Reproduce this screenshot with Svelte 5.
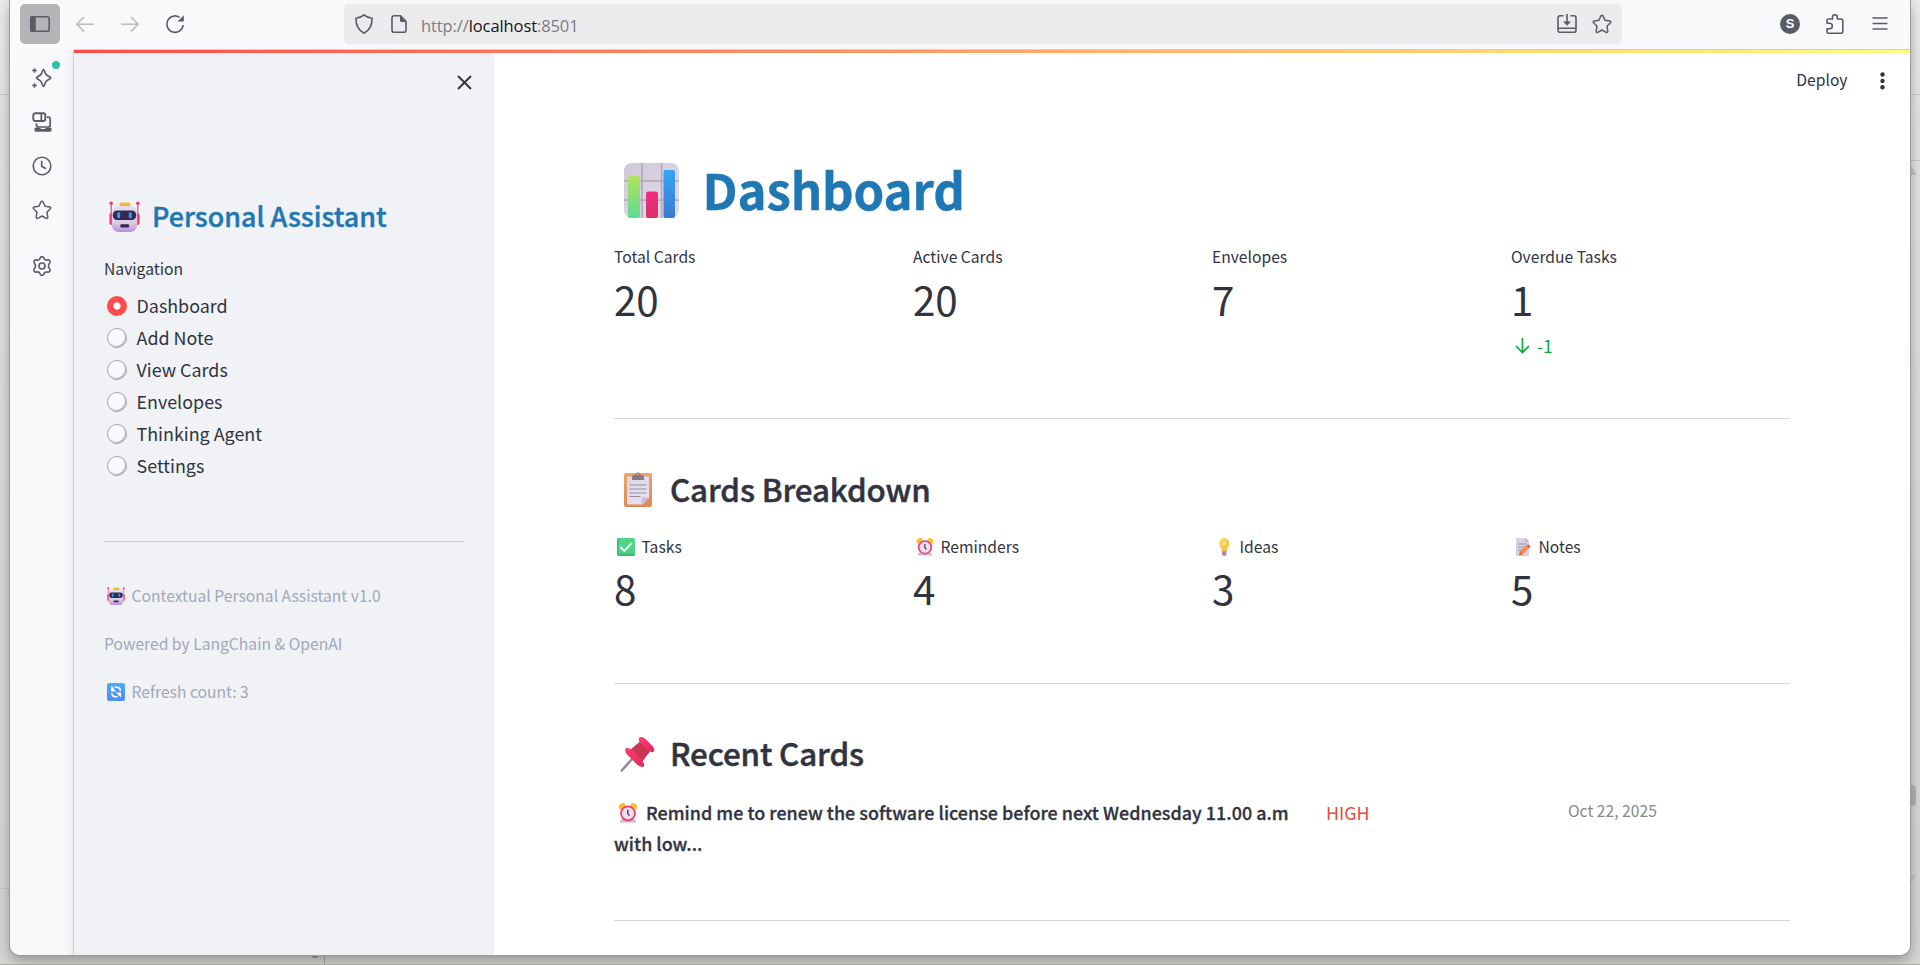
<script>
  const nav = ['Dashboard', 'Add Note', 'View Cards', 'Envelopes', 'Thinking Agent', 'Settings'];
  let current = $state('Dashboard');

  const totals = [
    { label: 'Total Cards', value: '20' },
    { label: 'Active Cards', value: '20' },
    { label: 'Envelopes', value: '7' },
    { label: 'Overdue Tasks', value: '1', delta: '-1' }
  ];
  const breakdown = [
    { icon: 'check', label: 'Tasks', value: '8' },
    { icon: 'clock', label: 'Reminders', value: '4' },
    { icon: 'bulb', label: 'Ideas', value: '3' },
    { icon: 'memo', label: 'Notes', value: '5' }
  ];
</script>

<svg class="defs" aria-hidden="true">
  <defs>
    <linearGradient id="gHead" x1="0" y1="0" x2="0" y2="1"><stop offset="0" stop-color="#e6dcee" /><stop offset=".65" stop-color="#d9cde2" /><stop offset="1" stop-color="#bd8be0" /></linearGradient>
    <linearGradient id="gPanel" x1="0" y1="0" x2="1" y2="1"><stop offset="0" stop-color="#cfc8d6" /><stop offset=".5" stop-color="#d9d2e0" /><stop offset="1" stop-color="#e4dcea" /></linearGradient>
    <linearGradient id="gGreen" x1="0" y1="0" x2="0" y2="1"><stop offset="0" stop-color="#b2e35c" /><stop offset="1" stop-color="#5ddc92" /></linearGradient>
    <linearGradient id="gPink" x1="0" y1="0" x2="0" y2="1"><stop offset="0" stop-color="#ee2d86" /><stop offset="1" stop-color="#d93065" /></linearGradient>
    <linearGradient id="gBlue" x1="0" y1="0" x2="0" y2="1"><stop offset="0" stop-color="#34a6f6" /><stop offset="1" stop-color="#3b78d0" /></linearGradient>
    <linearGradient id="gBoard" x1="0" y1="0" x2="0" y2="1"><stop offset="0" stop-color="#eda46a" /><stop offset="1" stop-color="#d98b57" /></linearGradient>
    <linearGradient id="gPaper" x1="0" y1="0" x2="1" y2="1"><stop offset="0" stop-color="#dcd5e6" /><stop offset="1" stop-color="#ece3f5" /></linearGradient>
    <linearGradient id="gBulb" x1="0" y1="0" x2="1" y2="1"><stop offset="0" stop-color="#ffe066" /><stop offset="1" stop-color="#f6b13a" /></linearGradient>
    <linearGradient id="gPin" x1="0" y1="0" x2="1" y2="1"><stop offset="0" stop-color="#ff3f6e" /><stop offset="1" stop-color="#e4285c" /></linearGradient>
    <linearGradient id="gSync" x1="0" y1="0" x2="0" y2="1"><stop offset="0" stop-color="#50aafc" /><stop offset="1" stop-color="#4a8ff0" /></linearGradient>

    <symbol id="robot" viewBox="0 0 31 31">
      <rect x=".5" y="12" width="5" height="12" rx="2" fill="#f7306d" /><rect x="25.500" y="12" width="5" height="12" rx="2" fill="#f7306d" />
      <path d="M2.200 3v11M28.800 3v11" stroke="#e83a72" stroke-width="1.100" /><circle cx="2.200" cy="2.200" r="1.700" fill="#f7306d" /><circle cx="28.800" cy="2.200" r="1.700" fill="#f7306d" />
      <rect x="10.500" y="1.500" width="11" height="6" rx="2" fill="#f5b62e" />
      <rect x="2.800" y="5" width="25.400" height="26" rx="7" fill="url(#gHead)" />
      <rect x="3.800" y="9.500" width="23.400" height="9.400" rx="4.300" fill="#38274f" />
      <rect x="8.200" y="11.300" width="3" height="6" rx="1.300" fill="#20a5f5" /><rect x="19.800" y="11.300" width="3" height="6" rx="1.300" fill="#20a5f5" />
      <rect x="11.300" y="23.200" width="8.800" height="3.200" rx="1.200" fill="#38274f" />
    </symbol>
    <symbol id="chart" viewBox="0 0 55 55">
      <rect width="55" height="55" rx="8" fill="url(#gPanel)" />
      <path d="M0 17.800h55M0 37.200h55M18 0v55M37.600 0v55" stroke="#b3abbb" stroke-width="1.700" />
      <rect x="4" y="13" width="12" height="42" rx="2" fill="url(#gGreen)" /><rect x="22" y="28.500" width="12" height="26.500" rx="2" fill="url(#gPink)" /><rect x="39.500" y="7" width="11.500" height="48" rx="2" fill="url(#gBlue)" />
    </symbol>
    <symbol id="board" viewBox="0 0 28 35">
      <rect y="1" width="28" height="34" rx="2" fill="url(#gBoard)" /><path d="M3 4.500h22v21l-6.500 7H4a1 1 0 0 1-1-1z" fill="url(#gPaper)" />
      <path d="M25 25.500l-7.500 7V27a1.500 1.500 0 0 1 1.500-1.500z" fill="#cbb9dd" /><path d="M5.500 13h17M5.500 17h17M5.500 21h17M5.500 24.500h11" stroke="#968f9f" stroke-width="1.100" />
      <path d="M8 8V4.700Q8 3 10 3h1.500a2.500 2.500 0 0 1 5 0H18q2 0 2 1.700V8z" fill="#837b8a" />
      <circle cx="14" cy="2.500" r="1" fill="#c9a98f" />
    </symbol>
    <symbol id="check" viewBox="0 0 18 18"><rect width="18" height="18" rx="2" fill="#4fd489" /><path d="M0 2v14q0 2 2 2h14q2 0 2-2v-.5H1.500V0Q0 .2 0 2z" fill="#3dbb75" /><path d="M3.700 9.500l3.700 3.400 7-7.500" fill="none" stroke="#fff" stroke-width="1.800" stroke-linecap="round" stroke-linejoin="round" /></symbol>
    <symbol id="clock" viewBox="0 0 18 18">
      <path d="M3 14.500h12l1.500 3h-15z" fill="#cdb9df" /><ellipse cx="3.600" cy="2.900" rx="3.300" ry="2.500" transform="rotate(-35 3.600 2.900)" fill="#fbbc35" /><ellipse cx="14.400" cy="2.900" rx="3.300" ry="2.500" transform="rotate(35 14.400 2.900)" fill="#fbc535" />
      <circle cx="9" cy="9.300" r="6.300" fill="#ecdff2" stroke="#f2416c" stroke-width="1.700" /><path d="M8.800 6v3.500l1.600 1.900" fill="none" stroke="#493058" stroke-width="1.200" />
    </symbol>
    <symbol id="bulb" viewBox="0 0 18 18"><path d="M7 12h4.500v4.600q0 1.400-2.200 1.400T7 16.600z" fill="#a78bb5" /><path d="M9.200 0a5 5 0 0 0-5 5c0 3.700 2.300 4.300 2.500 8.300h5c.2-4 2.500-4.600 2.500-8.300a5 5 0 0 0-5-5z" fill="url(#gBulb)" /><circle cx="9.500" cy="5" r="2" fill="#ffeb96" /></symbol>
    <symbol id="memo" viewBox="0 0 18 18"><path d="M2 0h9.500L15 3.500V18H2z" fill="#d8cfe0" /><path d="M11.500 0L15 3.500h-3.500z" fill="#b6a8c4" /><path d="M4 6h9M4 9h8M4 12h6" stroke="#958ca0" stroke-width=".9" /><path d="M6 13.500l6.500-6 2.500 2.500-6.500 6.500L5.500 17z" fill="#f98a35" /><path d="M12.500 7.500l2-1 2 2-1.300 1.700z" fill="#e84d55" /><path d="M6 13.500l2.500 3L5 17.500z" fill="#ef5c46" /></symbol>
    <symbol id="pin" viewBox="0 0 35 35">
      <path d="M1.800 33.500L12.500 21.500" stroke="#948a9c" stroke-width="2.600" stroke-linecap="round" /><path d="M10 13l10-8.500 10 10L22 25z" fill="#c93650" />
      <path d="M8 11c-3-1.500-4 3-.5 7l9.500 9.500c3.500 3 8.500 3.500 7-.5q-1-3-4-6L13.500 14Q11 12 8 11z" fill="url(#gPin)" /><path d="M19 1c1.500-2 5-.5 7.500 2l5.500 5.500c2.500 3 3 5 1.500 6.300s-4-.3-6.500-2.500L20.500 6Q18 3 19 1z" fill="url(#gPin)" />
    </symbol>
    <symbol id="sync" viewBox="0 0 18 18"><rect width="18" height="18" rx="2" fill="url(#gSync)" /><g fill="none" stroke="#fff" stroke-width="1.600"><path d="M7.500 4.300h2a4 4 0 0 1 4 3.500M10.500 13.700H8.700a4 4 0 0 1-4-3.500" /></g><path d="M4 3.500v5h5L7.300 6.800 5.700 3.500zM14 14.500v-5H9l1.700 1.700z" fill="#fff" /></symbol>
    <symbol id="star" viewBox="0 0 20 20"><path d="M10 1.200c.5 0 .8.300 1 .7l2 4.300 4.800.7c1 .2 1.300 1.200.6 1.900l-3.500 3.400.9 4.900c.2 1-.8 1.700-1.600 1.200L10 16l-4.200 2.300c-.9.500-1.800-.2-1.600-1.200l.8-4.900-3.400-3.400c-.7-.7-.4-1.700.5-1.900l4.800-.7 2-4.300c.3-.4.600-.7 1.100-.7z" fill="none" stroke="currentColor" stroke-width="1.500" stroke-linejoin="round" /></symbol>
  </defs>
</svg>

{#snippet emoji(name, cls)}
  <svg class="emoji {cls}" aria-hidden="true"><use href="#{name}" /></svg>
{/snippet}

{#snippet metric(m)}
  <div class="metric">
    <div class="label">{#if m.icon}{@render emoji(m.icon, 'sm')}{/if}{m.label}</div>
    <div class="value">{m.value}</div>
    {#if m.delta}
      <div class="delta">
        <svg width="15" height="16" viewBox="0 0 15 16" fill="none" stroke="currentColor" stroke-width="1.700"><path d="M7.500 0v14.500M1 8l6.500 6.500L14 8" /></svg>{m.delta}
      </div>
    {/if}
  </div>
{/snippet}

<div class="desktop">
  <div class="mark l1"></div><div class="mark l2"></div><div class="mark r1"></div><div class="mark r2"></div>
  <div class="mark b1"></div><div class="mark dot"></div>
  <div class="mark up"></div><div class="mark thumb"></div><div class="mark down"></div>

  <div class="window">
    <header class="toolbar">
      <button class="panel-toggle" aria-label="Sidebars">
        <svg width="20" height="16" viewBox="0 0 20 16"><rect x=".8" y=".8" width="18.400" height="14.400" rx="2" fill="none" stroke="#5b5b66" stroke-width="1.600" /><path d="M2 0h3.800v16H2a2 2 0 0 1-2-2V2a2 2 0 0 1 2-2z" fill="#5b5b66" /></svg>
      </button>
      <svg class="ic off" viewBox="0 0 20 20"><path d="M19 10.200H2.200M9 3L1.800 10.200 9 17.400" /></svg>
      <svg class="ic off" viewBox="0 0 20 20"><path d="M1 10.200h16.800M11 3l7.200 7.200L11 17.400" /></svg>
      <svg class="ic" viewBox="0 0 20 20"><path d="M14.600 3.300A8.200 8.200 0 1 0 18.200 11" /><path d="M18.800 1.300v6.200h-6.200z" fill="currentColor" stroke="none" /></svg>

      <div class="urlbar">
        <svg class="ic" viewBox="0 0 20 20"><path d="M10 .9c2 1.800 4.700 2.900 8 3.300.2 6.300-1.800 11.700-8 15C3.800 15.900 1.800 10.500 2 4.200c3.300-.4 6-1.500 8-3.300z" stroke-linejoin="round" /></svg>
        <svg class="ic page" viewBox="0 0 20 20"><path d="M11.500 1.800H5a2 2 0 0 0-2 2v12.500a2 2 0 0 0 2 2h10a2 2 0 0 0 2-2V7.500z" /><path d="M11 1.200L17.600 8H12.500A1.500 1.500 0 0 1 11 6.500z" fill="currentColor" stroke="none" /></svg>
        <span class="url">http://<b>localhost</b>:8501</span>
        <svg class="ic install" viewBox="0 0 20 20"><path d="M6.500 1.800H3a2 2 0 0 0-2 2v12.500a2 2 0 0 0 2 2h14a2 2 0 0 0 2-2V3.800a2 2 0 0 0-2-2h-3.500M1 14.300h18M10 0v10" /><path d="M6 7.500h8l-4 4.300z" fill="currentColor" stroke="none" /></svg>
        <svg class="ic"><use href="#star" /></svg>
      </div>

      <span class="avatar">S</span>
      <svg class="ic" viewBox="0 0 20 20"><path d="M2 9.300V6.500A1.500 1.500 0 0 1 3.500 5h4V3.200a2.400 2.400 0 0 1 4.800 0V5h4A1.500 1.500 0 0 1 17.800 6.500v11.200a1.500 1.500 0 0 1-1.500 1.500H3.500A1.500 1.500 0 0 1 2 17.700v-3h2.600a2.500 2.500 0 0 0 0-5.400z" stroke-linejoin="round" /></svg>
      <svg class="ic menu" viewBox="0 0 20 20"><path d="M2.500 4h15M2.500 9.500h15M2.500 15h15" /></svg>
    </header>

    <div class="below">
      <aside class="rail">
        <div class="spark">
          <svg class="ic" viewBox="0 0 20 20"><path d="M11.500 1.500c.8 0 1 2.200 2.300 4.500 1.400 2.200 5 2.900 5 3.900s-3.600 1.700-5 3.900c-1.300 2.300-1.500 4.700-2.300 4.700s-1-2.400-2.300-4.700c-1.400-2.200-4.700-2.900-4.700-3.900s3.300-1.700 4.700-3.900c1.300-2.300 1.500-4.500 2.300-4.500zM2.500.2v4.600M.2 2.500h4.600M2.500 15.200v4.600M.2 17.500h4.600" /></svg>
          <i></i>
        </div>
        <svg class="ic" viewBox="0 0 20 20"><rect x="1.300" y="1.300" width="12" height="7.700" rx="2" stroke-width="1.900" /><path d="M9.300 1v8M15 5.200h1.200a2 2 0 0 1 2 2V13a2 2 0 0 1-2 2H6.500a2 2 0 0 1-2-2v-1.700" stroke-width="1.700" /><path d="M2.500 15.800h5.500l1 1.200h4l1-1.200h5.500v1.700a2 2 0 0 1-2 2.300H4.500a2 2 0 0 1-2-2.300z" fill="currentColor" stroke="none" /></svg>
        <svg class="ic" viewBox="0 0 20 20"><circle cx="10" cy="10" r="8.800" /><path d="M9.700 4.800v5.400l4.300 2.600" /></svg>
        <svg class="ic"><use href="#star" /></svg>
        <svg class="ic gear" viewBox="0 0 20 20"><circle cx="10" cy="10" r="3" /><path d="M8.300 1.800a1.800 1.800 0 0 1 3.400 0c.5 1.900 2.100 2.700 3.900 2.100 1.600-.4 2.800 1.200 2.300 2.600l-.9 1.700c-.6 1-.6 2.500 0 3.500l.9 1.700c.6 1.500-.8 3.100-2.400 2.700-1.800-.5-3.300.3-3.800 2.100a1.800 1.800 0 0 1-3.400 0c-.5-1.800-2-2.600-3.800-2.100-1.600.4-3-1.200-2.400-2.700l.9-1.700c.6-1 .6-2.500 0-3.500l-.9-1.700c-.5-1.400.7-3 2.300-2.600 1.800.6 3.400-.2 3.900-2.100z" stroke-linejoin="round" /></svg>
      </aside>

      <div class="page">
        <div class="decoration"></div>
        <div class="app">
          <nav class="sidebar">
            <div class="close">
              <svg width="15" height="15" viewBox="0 0 15 15" fill="none" stroke="#31333f" stroke-width="1.900"><path d="M1 1l13 13M14 1L1 14" /></svg>
            </div>
            <h2 class="brand">{@render emoji('robot', 'md')}Personal Assistant</h2>
            <div class="nav-label">Navigation</div>
            <div class="radios">
              {#each nav as item}
                <button class="radio" onclick={() => (current = item)}><span class="ring" class:on={current === item}></span>{item}</button>
              {/each}
            </div>
            <hr />
            <div class="foot">
              <p>{@render emoji('robot', 'sm')}Contextual Personal Assistant v1.0</p>
              <p>Powered by LangChain &amp; OpenAI</p>
              <p>{@render emoji('sync', 'sm')}Refresh count: 3</p>
            </div>
          </nav>

          <main>
            <div class="topbar">
              <span>Deploy</span>
              <svg width="5" height="18" viewBox="0 0 5 18" fill="#31333f"><circle cx="2.500" cy="2.500" r="2.200" /><circle cx="2.500" cy="8.900" r="2.200" /><circle cx="2.500" cy="15.300" r="2.200" /></svg>
            </div>
            <h1>{@render emoji('chart', 'xl')}Dashboard</h1>
            <section class="grid top">{#each totals as m}{@render metric(m)}{/each}</section>
            <hr />
            <h2 class="h2">{@render emoji('board', 'board')}Cards Breakdown</h2>
            <section class="grid mid">{#each breakdown as m}{@render metric(m)}{/each}</section>
            <hr />
            <h2 class="h2 second">{@render emoji('pin', 'pin')}Recent Cards</h2>
            <section class="recent">
              <p class="name">{@render emoji('clock', 'clk')}Remind me to renew the software license before next Wednesday 11.00 a.m with low...</p>
              <p class="prio">HIGH</p>
              <p class="date">Oct 22, 2025</p>
            </section>
            <hr />
          </main>
        </div>
      </div>
    </div>
  </div>
</div>

<style>
  :global(body) { margin: 0; }
  * { box-sizing: border-box; }
  h1, h2, p { margin: 0; }
  .defs { position: absolute; width: 0; height: 0; }
  button { border: 0; background: none; padding: 0; font: inherit; color: inherit; text-align: left; }
  hr { border: 0; border-top: 1px solid #d5d6d9; margin: 0; width: 100%; }

  .desktop {
    position: relative; width: 1920px; height: 965px; overflow: hidden; padding-left: 10px;
    background: linear-gradient(180deg, #ececec 0, #e4e4e4 120px, #d9d9d9 600px, #d6d6d6 100%);
    border-bottom: 1px solid #aaa9a4;
    font-family: "Source Sans Pro", "Noto Sans CJK SC", sans-serif; color: #31333f;
  }
  .window {
    position: relative; width: 1900px; height: 955px; display: flex; flex-direction: column; background: #f9f9fb;
    border-radius: 0 0 10px 10px; overflow: hidden; box-shadow: 0 0 0 1px #9c9c9e, 0 5px 14px rgba(0, 0, 0, .34);
  }
  .mark { position: absolute; background: #c6c6c6; }
  .l1 { left: 0; top: 94px; width: 9px; height: 1px; }
  .l2 { left: 0; top: 888px; width: 9px; height: 1px; }
  .r1 { left: 1911px; top: 94px; width: 9px; height: 1px; }
  .r2 { left: 1911px; top: 160px; width: 9px; height: 1px; }
  .b1 { left: 324px; top: 956px; width: 1px; height: 8px; background: #a5a5a5; }
  .dot { left: 312px; top: 953px; width: 6px; height: 5px; border-radius: 3px; background: #969696; }
  .up { left: 1905px; top: 166px; width: 12px; height: 9px; background: #c4c4c4; clip-path: polygon(50% 0, 100% 100%, 0 100%); }
  .thumb { left: 1906px; top: 785px; width: 10px; height: 21px; border-radius: 4px; background: #b4b4b4; }
  .down { left: 1905px; top: 875px; width: 12px; height: 8px; background: #c8c8c8; clip-path: polygon(0 0, 100% 0, 50% 100%); }

  .toolbar { height: 49px; display: flex; align-items: center; padding: 0 0 1px 10px; }
  .toolbar > * { flex: none; }
  .panel-toggle { width: 40px; height: 40px; border-radius: 5px; background: #b4b4b6; display: grid; place-items: center; margin-right: -10px; }
  .ic { width: 20px; height: 20px; fill: none; stroke: currentColor; stroke-width: 1.6; color: #5b5b66; flex: none; }
  .toolbar > .ic { margin-left: 25px; }
  .toolbar > .off { color: #bcbcc1; }
  .menu { stroke-width: 1.4; }
  .urlbar { margin-left: 159px; width: 1278px; height: 40px; border-radius: 5px; background: #ebebed; display: flex; align-items: center; padding: 0 10px; }
  .page { margin-left: 15px; }
  .url { font: 16.5px/24px "Open Sans", sans-serif; letter-spacing: -.1px; color: #7c7c84; margin-left: 12px; position: relative; top: 1.500px; }
  .url b { font-weight: 400; color: #15141a; }
  .install { margin-left: auto; margin-right: 15px; }
  .avatar { margin-left: 158px; width: 20px; height: 20px; border-radius: 50%; background: #5b5b66; color: #fff; font: bold 13px/20px "Liberation Sans", sans-serif; text-align: center; }

  .below { flex: 1; display: flex; min-height: 0; }
  .rail { width: 64px; border-right: 1px solid #cfcfd3; margin-top: 1px; padding-top: 18px; display: flex; flex-direction: column; align-items: center; gap: 24px; background: linear-gradient(90deg, #f9f9fb 54px, #f0f0f2 63px); }
  .spark { position: relative; height: 20px; }
  .spark i { position: absolute; right: -8px; top: -7px; width: 8px; height: 8px; border-radius: 50%; background: #2ac3a2; }
  .gear { margin-top: 12px; }
  .below .page { flex: 1; margin-left: 0; display: flex; flex-direction: column; border-top: 1px solid #cfcfd3; }
  .decoration { height: 3px; background: linear-gradient(90deg, #ff4b4b, #fffd80); }
  .app { flex: 1; display: flex; min-height: 0; }

  .sidebar { width: 420px; background: #f0f2f6; padding: 0 30px; flex: none; overflow: hidden; }
  .close { height: 58px; display: flex; align-items: center; justify-content: flex-end; margin-right: -8px; }
  .emoji { flex: none; }
  .emoji.sm { width: 18px; height: 18px; margin: 0 6.500px 0 3px; position: relative; top: -.5px; }
  .emoji.md { width: 31px; height: 31px; margin: 0 12px 0 5px; }
  .brand { display: flex; align-items: center; height: 36px; margin-top: 87px; font-size: 26.9px; line-height: 36px; font-weight: 500; color: #1f77b4; -webkit-text-stroke: .4px; }
  .nav-label { margin-top: 23px; font-size: 15.67px; line-height: 24px; }
  .radios { margin-top: 9px; }
  .radio { width: 100%; height: 32px; display: flex; align-items: center; padding-left: 3px; font-size: 17.9px; line-height: 30px; padding-bottom: 2px; }
  .ring { width: 20px; height: 20px; border-radius: 50%; background: #fafafc; border: 1px solid #a5a6ab; border-width: 1px 1.500px 1.500px 1px; box-shadow: inset -1px -1px 1px #b4b5ba; margin-right: 9.500px; position: relative; top: 1px; }
  .ring.on { background: radial-gradient(circle, #fff 3.200px, #ff4b4b 4px); border: 0; box-shadow: none; }
  .sidebar hr { margin-top: 59px; border-color: #cbccd1; }
  .foot { margin-top: 42px; display: flex; flex-direction: column; gap: 24px; color: #a3a8b8; font-size: 15.67px; line-height: 24px; }
  .foot p { display: flex; align-items: center; white-space: nowrap; }

  main { flex: 1; background: #fff; padding: 0 120px; overflow: hidden; }
  .topbar { height: 56px; margin-right: -95px; display: flex; align-items: center; justify-content: flex-end; gap: 32.500px; font-size: 15.67px; line-height: 24px; }
  .topbar span { position: relative; top: -1.500px; }
  h1 { display: flex; align-items: center; margin-top: 46.500px; height: 66px; font-size: 49.2px; line-height: 66px; font-weight: 700; color: #1f77b4; letter-spacing: -.12px; -webkit-text-stroke: .4px; }
  .emoji.xl { width: 55px; height: 55px; margin: 4px 23.500px 0 10px; }
  .grid { display: grid; grid-template-columns: repeat(4, 1fr); column-gap: 20px; }
  .top { margin-top: 23.500px; height: 173px; }
  .label { display: flex; align-items: center; font-size: 15.67px; line-height: 24px; height: 24px; }
  .value { font-size: 40.300px; line-height: 54px; margin-top: 2.800px; }
  .delta { display: flex; align-items: center; gap: 7px; margin-top: 5px; padding-left: 4px; color: #09ab3b; font-size: 17.5px; line-height: 30px; }
  .h2 { display: flex; align-items: center; height: 42px; margin-top: 49px; font-size: 31.3px; line-height: 42px; font-weight: 500; letter-spacing: -.12px; -webkit-text-stroke: .5px; }
  .h2.second { margin-top: 48px; }
  .emoji.board { width: 28px; height: 35px; margin: 1px 18px 0 10px; }
  .emoji.pin { width: 35px; height: 35px; margin: 2px 15px 0 6px; }
  .mid { margin-top: 25px; height: 148px; }
  .mid .value { margin-top: 2px; }
  .recent { display: grid; grid-template-columns: 692px 222px 222px; column-gap: 20px; margin-top: 22.500px; height: 123.500px; font-size: 17.9px; line-height: 31.500px; }
  .name { font-weight: 500; letter-spacing: .025px; -webkit-text-stroke: .3px; }
  .emoji.clk { width: 20px; height: 20px; margin: 0 8px 0 4px; vertical-align: -3px; }
  .prio { color: #e74c3c; }
  .date { color: #888; font-size: 15.67px; line-height: 27px; }
</style>
